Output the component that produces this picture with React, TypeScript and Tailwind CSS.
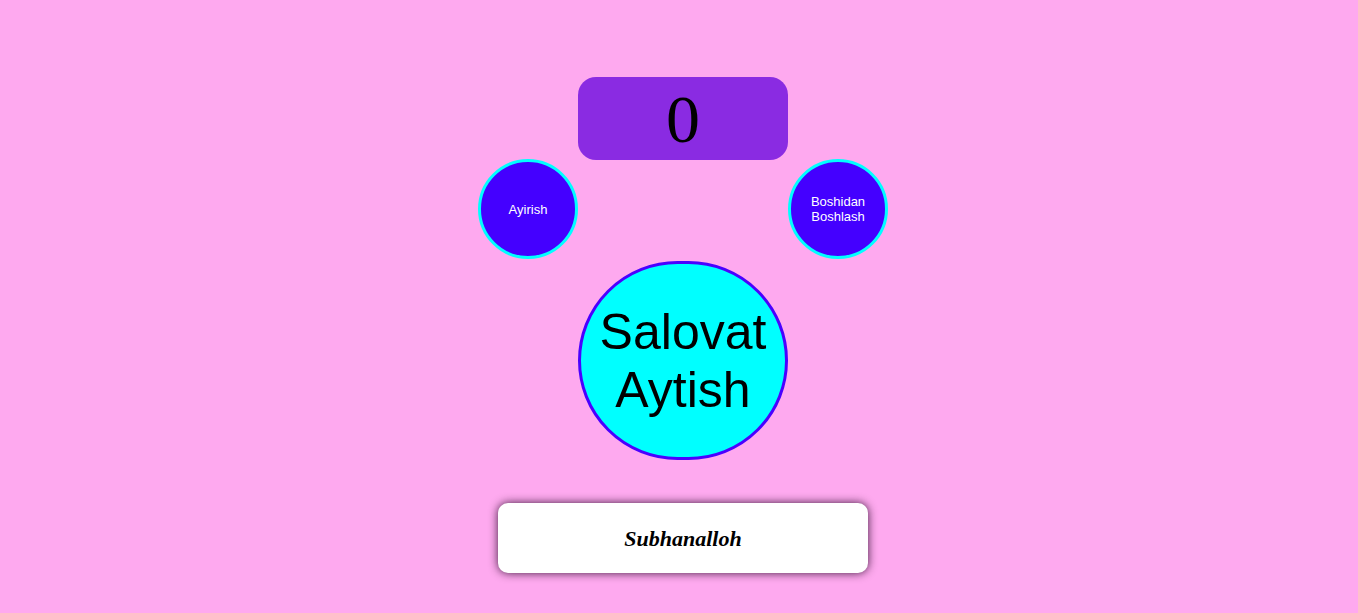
export default function App() {
  return (
    <div className="min-h-[613px] w-full bg-[#fea9ef] pl-[8px] pt-[77px] flex flex-col items-center">
      <div className="w-[210px] h-[83px] rounded-[18px] bg-[#8a2be2] flex items-center justify-center">
        <span className="text-black text-[68px] leading-none" style={{ fontFamily: '"Liberation Serif", serif' }}>
          0
        </span>
      </div>

      <div className="w-[410px] flex justify-between" style={{ fontFamily: '"Liberation Sans", Arial, sans-serif' }}>
        <button className="w-[100px] h-[100px] -mt-[1px] rounded-full bg-[#4400ff] border-[3px] border-[#00ffff] text-white text-[13px] leading-[15px] flex items-center justify-center">
          Ayirish
        </button>
        <button className="w-[100px] h-[100px] -mt-[1px] rounded-full bg-[#4400ff] border-[3px] border-[#00ffff] text-white text-[13px] leading-[15px] flex items-center justify-center text-center">
          Boshidan
          <br />
          Boshlash
        </button>
      </div>

      <button
        className="mt-[2px] w-[210px] h-[199px] rounded-full bg-[#00ffff] border-[3px] border-[#4a00ff] text-black text-[50px] leading-[58px] flex items-center justify-center text-center"
        style={{ fontFamily: '"Liberation Sans", Arial, sans-serif' }}
      >
        Salovat
        <br />
        Aytish
      </button>

      <div className="mt-[43px] w-[370px] h-[70px] rounded-[10px] bg-white shadow-[0_0_10px_rgba(30,0,30,0.85)] flex items-center justify-center">
        <span className="text-[22px] font-bold italic text-black" style={{ fontFamily: '"Liberation Serif", serif' }}>
          Subhanalloh
        </span>
      </div>
    </div>
  )
}
